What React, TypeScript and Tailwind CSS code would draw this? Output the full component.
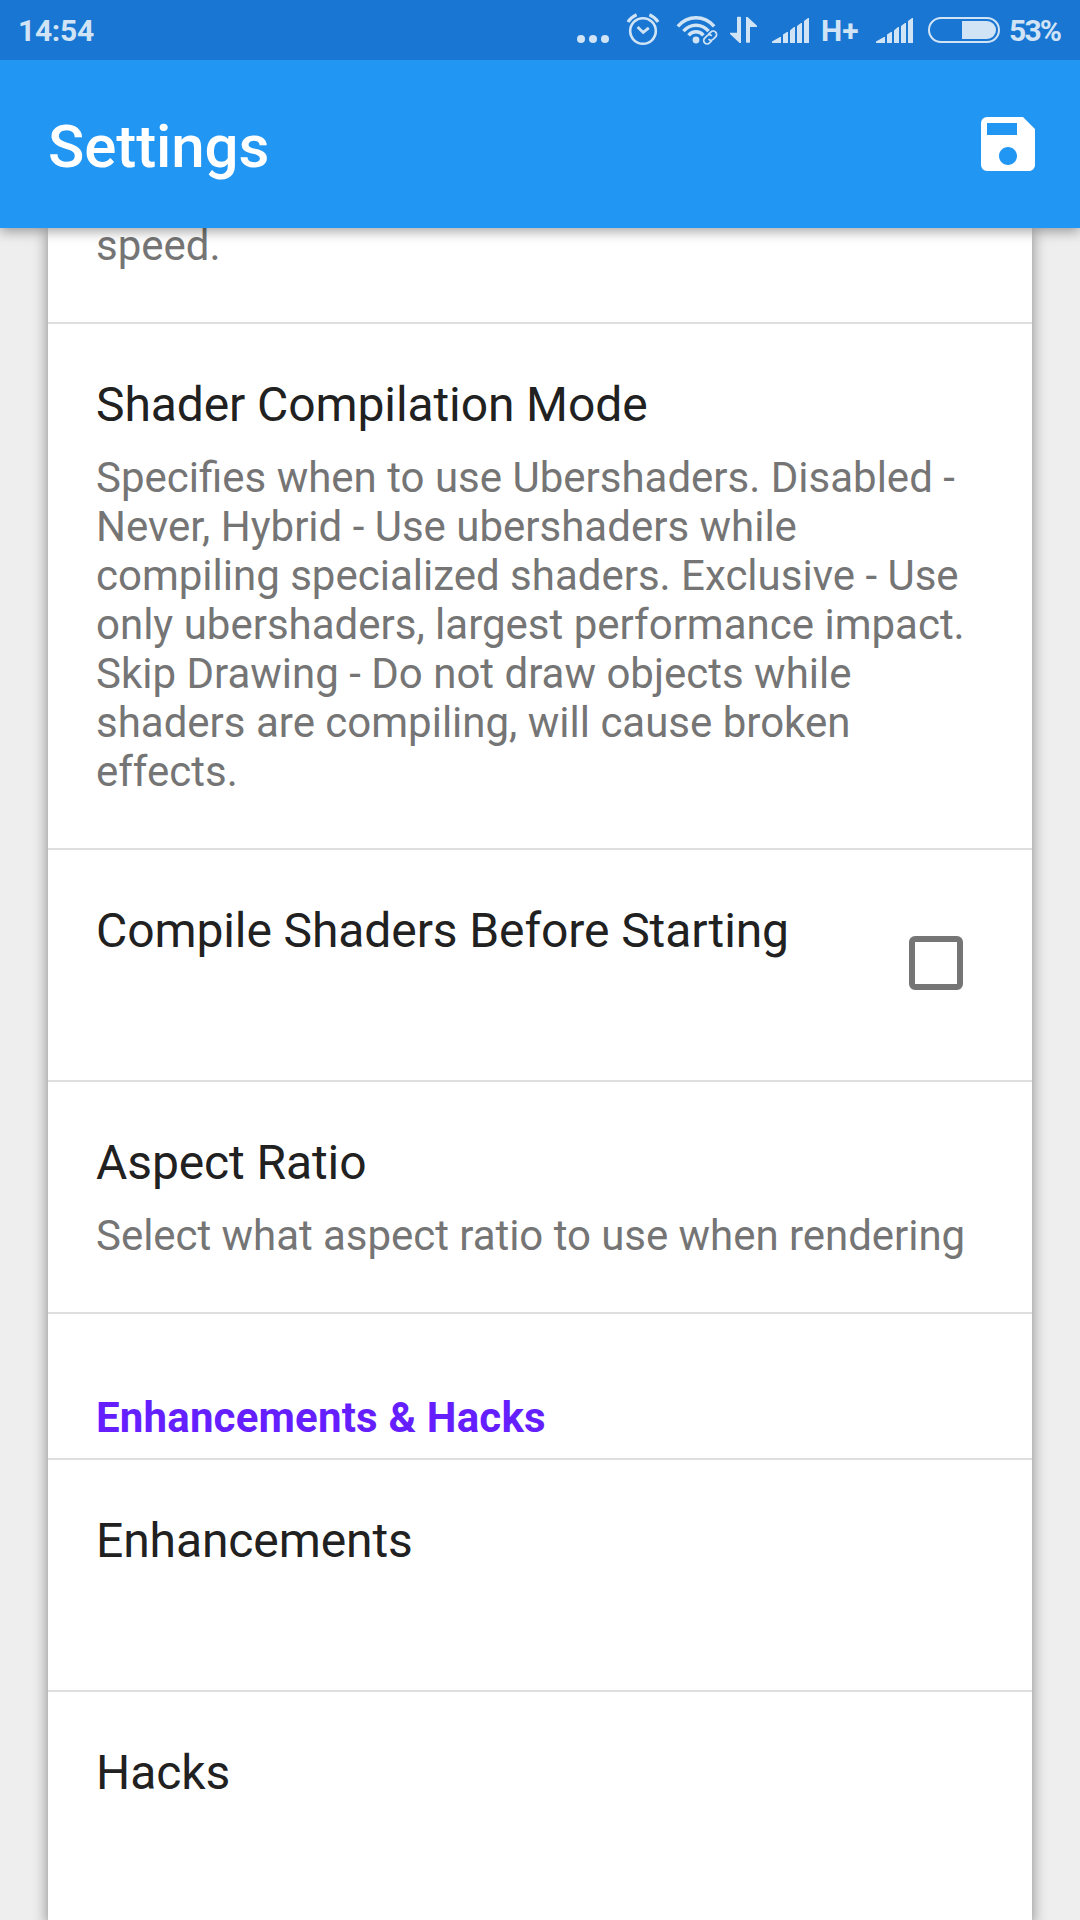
import type { ReactNode } from "react";
import { MdSave } from "react-icons/md";

function AlarmIcon() {
	return (
		<svg width={34} height={60} viewBox="626 0 34 60" fill="none" stroke="currentColor" className="ml-[17px]">
			<circle cx={643} cy={31} r={12.8} strokeWidth={2.6} />
			<path d="M628 22q3.2-5 8.6-7.2M658 22q-3.2-5-8.6-7.2" strokeWidth={3.2} />
			<path d="M637.6 27l5.6 5.4 5.6-4.6" strokeWidth={2.8} />
		</svg>
	);
}

function WifiIcon() {
	return (
		<svg width={42} height={60} viewBox="676 0 42 60" fill="none" stroke="currentColor" className="ml-4">
			<circle cx={696} cy={40} r={3.4} fill="currentColor" stroke="none" />
			<path d="M677.8 26.4q7.6-8.6 18.2-8.6t18.2 8.6" strokeWidth={3.4} />
			<path d="M683.4 31.2q5.2-6 12.6-6t12.6 6" strokeWidth={3.4} />
			<path d="M688.6 35.4q3-3.6 7.4-3.6t7.4 3.6" strokeWidth={3.4} />
			<g strokeWidth={1.7} transform="rotate(-45 710 37.5)">
				<path d="M709 41h-3.2a3.4 3.4 0 0 1 0-6.8h3.6a3.4 3.4 0 0 1 3 3.4" />
				<path d="M711 34.2h3.4a3.4 3.4 0 0 1 0 6.8h-3.6a3.4 3.4 0 0 1-3-3.4" />
			</g>
		</svg>
	);
}

function DataIcon() {
	return (
		<svg width={28} height={60} viewBox="730 0 28 60" fill="currentColor" className="ml-3">
			<path d="M737 17.5q0-.8.8-.8h2.4q.8 0 .8.8V43h-1.4L730 34v-1.2h7z" />
			<path d="M746 17h1.6L757 25.8V27h-7v15q0 .8-.8.8h-2.4q-.8 0-.8-.8z" />
		</svg>
	);
}

function SignalIcon({ className }: { className?: string }) {
	return (
		<svg width={37} height={60} viewBox="0 0 37 60" fill="currentColor" className={className}>
			<path d="M0 43v-1.5L8 37h1v6zM11 43v-8.5l4-2.5h1v11zM18 43V30.5L22 27h1v16zM25 43V26l4-3h1v20zM32 43V21l4-3h1v25z" />
		</svg>
	);
}

function BatteryIcon() {
	return (
		<svg width={72} height={60} viewBox="0 0 72 60" className="ml-[15px]">
			<rect x={1} y={18} width={70} height={24} rx={12} fill="none" stroke="currentColor" strokeWidth={2} />
			<path d="M34 21h25a9 9 0 0 1 0 18H34z" fill="currentColor" />
		</svg>
	);
}

function StatusBar() {
	return (
		<div className="flex h-[60px] shrink-0 items-center bg-[#1976d2] pl-[18px] text-[30px] font-bold leading-[60px] text-[#d1e4f6]">
			<span className="w-[559px] pt-px tracking-[-0.3px]">14:54</span>
			<svg width={32} height={60} viewBox="577 0 32 60" fill="currentColor">
				<circle cx={581} cy={39} r={4} />
				<circle cx={593} cy={39} r={4} />
				<circle cx={605} cy={39} r={4} />
			</svg>
			<AlarmIcon />
			<WifiIcon />
			<DataIcon />
			<SignalIcon className="ml-[14px]" />
			<span className="ml-3 w-[55px] pt-px">H+</span>
			<SignalIcon />
			<BatteryIcon />
			<span className="ml-[9px] pt-px tracking-[-1.8px]">53%</span>
		</div>
	);
}

function Toolbar() {
	return (
		<div className="flex h-[168px] shrink-0 items-center justify-between bg-[#2196f3] pl-12 pr-9 text-white">
			<h1 className="mt-1.5 text-[60px] font-medium leading-[70px] tracking-[-0.1px]">Settings</h1>
			<MdSave size={72} />
		</div>
	);
}

type RowProps = {
	title: string;
	summary?: ReactNode;
	checkbox?: boolean;
};

function SettingRow({ title, summary, checkbox }: RowProps) {
	return (
		<div className="flex min-h-[232px] justify-between border-b-2 border-[#dfdfdf] px-12 pb-[52px] pt-[53px]">
			<div className="whitespace-nowrap">
				<h2 className="text-[48px] leading-[56px] tracking-[-0.1px] text-[#212121]">{title}</h2>
				{summary && <p className="mt-5 text-[42px] leading-[49px] text-[#757575]">{summary}</p>}
			</div>
			{checkbox && <div className="mr-[21px] mt-[33px] size-[54px] rounded-[6px] border-[6px] border-[#757575]" />}
		</div>
	);
}

function App() {
	return (
		<div className="flex h-[1920px] w-[1080px] flex-col overflow-hidden bg-[#eeeeee] font-['Roboto',sans-serif]">
			<header className="relative z-10 shadow-[0_3px_12px_rgba(0,0,0,0.38)]">
				<StatusBar />
				<Toolbar />
			</header>

			<main className="mx-12 flex-1 bg-white shadow-[0_2px_14px_rgba(0,0,0,0.45)]">
				{/* tail of the setting scrolled under the toolbar */}
				<div className="flex h-24 items-end border-b-2 border-[#dfdfdf] px-12 pb-[52px]">
					<p className="text-[42px] leading-[49px] text-[#757575]">speed.</p>
				</div>
				<SettingRow
					title="Shader Compilation Mode"
					summary={
						<>
							Specifies when to use Ubershaders. Disabled -
							<br />
							Never, Hybrid - Use ubershaders while
							<br />
							compiling specialized shaders. Exclusive - Use
							<br />
							only ubershaders, largest performance impact.
							<br />
							Skip Drawing - Do not draw objects while
							<br />
							shaders are compiling, will cause broken
							<br />
							effects.
						</>
					}
				/>
				<SettingRow title="Compile Shaders Before Starting" checkbox />
				<SettingRow
					title="Aspect Ratio"
					summary={<span className="tracking-[-0.04px]">Select what aspect ratio to use when rendering</span>}
				/>
				<div className="flex h-[146px] items-end border-b-2 border-[#dfdfdf] px-12 pb-4">
					<h3 className="text-[42px] font-bold leading-[49px] tracking-[0.18px] text-[#651fff]">Enhancements &amp; Hacks</h3>
				</div>
				<SettingRow title="Enhancements" />
				<SettingRow title="Hacks" />
			</main>
		</div>
	);
}

export default App;
